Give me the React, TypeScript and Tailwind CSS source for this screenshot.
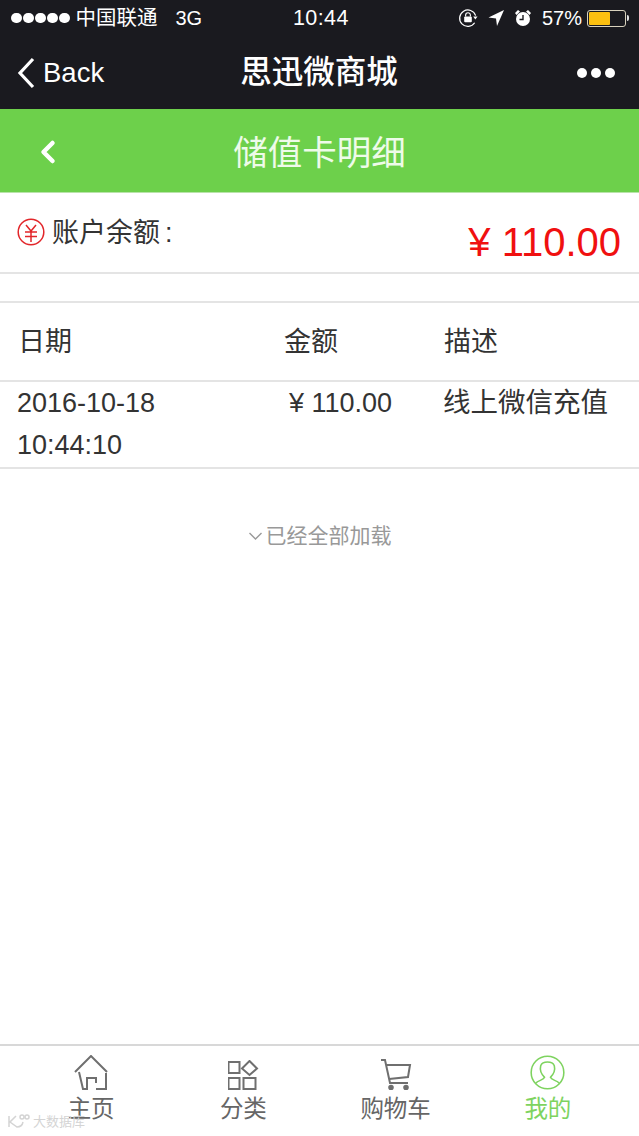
import { ChevronLeft } from 'lucide-react'

const tabs = [
  { label: '主页', active: false, icon: <HomeIcon /> },
  { label: '分类', active: false, icon: <GridIcon /> },
  { label: '购物车', active: false, icon: <CartIcon /> },
  { label: '我的', active: true, icon: <UserIcon /> },
]

function HomeIcon() {
  return (
    <svg width="34" height="35" viewBox="0 0 34 35" fill="none" stroke="#6f6f6f" strokeWidth="2">
      <path d="M1 17 L17 1 L33 17" />
      <path d="M5 17 L9 34 H13 V23 H22 V28" />
      <path d="M32 18 V34 H22" />
    </svg>
  )
}

function GridIcon() {
  return (
    <svg width="31" height="30" viewBox="0 0 31 30" fill="none" stroke="#6f6f6f" strokeWidth="2">
      <rect x="0.5" y="2" width="11" height="11" />
      <path d="M21.5 1 L29 8.5 L21.5 15 L14 8.5 Z" />
      <rect x="0.5" y="18" width="11" height="11" />
      <rect x="15.5" y="18" width="12" height="11" />
    </svg>
  )
}

function CartIcon() {
  return (
    <svg width="32" height="31" viewBox="0 0 32 31" fill="none" stroke="#6f6f6f" strokeWidth="2">
      <path d="M1 1 H5 L10 24 H28" />
      <path d="M6 6 H30 L28 18 L9 20" />
      <circle cx="11" cy="28.5" r="1.8" fill="#6f6f6f" />
      <circle cx="26" cy="28.5" r="1.8" fill="#6f6f6f" />
    </svg>
  )
}

function UserIcon() {
  return (
    <svg width="35" height="35" viewBox="0 0 36 36" fill="none" stroke="#7ed35f" strokeWidth="1.6">
      <circle cx="18" cy="18" r="16.8" />
      <path d="M6 29 C8 26 14 26 15 23 C12 20 10 15 11 11 C13 6 23 6 25 11 C26 15 24 20 21 23 C22 26 28 26 30 29" />
    </svg>
  )
}

function StatusIcons() {
  return (
    <div className="flex items-center">
      <svg width="20" height="20" viewBox="0 0 21 21" fill="none" className="mr-[10px]">
        <path d="M18.5 8 A 8.6 8.6 0 1 0 17.5 15.5" stroke="#fff" strokeWidth="1.3" />
        <path d="M16 9 H20.5 L18.2 12 Z" fill="#fff" />
        <rect x="6.5" y="9" width="8" height="6" rx="1" fill="#fff" />
        <path d="M8 9 V7.5 A2.5 2.5 0 0 1 13 7.5 V9" stroke="#fff" strokeWidth="1.2" />
      </svg>
      <svg width="17" height="18" viewBox="0 0 17 18" className="mr-[9px]">
        <path d="M16 1 L9 17 L8 9.5 L0.5 8.5 Z" fill="#fff" />
      </svg>
      <svg width="18" height="18" viewBox="0 0 18 18" className="mr-[10px]">
        <circle cx="9" cy="10" r="7" fill="#fff" />
        <path d="M1 4 L4 1 L6 2.5 L2.5 6 Z M17 4 L14 1 L12 2.5 L15.5 6 Z" fill="#fff" />
        <path d="M9 6 V10.5 H5.5" stroke="#1a1a1f" strokeWidth="1.4" fill="none" />
      </svg>
      <span className="text-[20px] mr-[5px]">57%</span>
      <div className="w-[39px] h-[17px] rounded-[3px] border border-[#d8d2bd] p-px">
        <div className="w-[21px] h-full rounded-[1px] bg-[#fcc010]" />
      </div>
      <div className="w-[2px] h-[6px] rounded-r-sm bg-[#e0e0e0] ml-px" />
    </div>
  )
}

export default function App() {
  return (
    <div className="w-[639px] h-[1136px] flex flex-col overflow-hidden bg-white font-['Liberation_Sans','Noto_Sans_CJK_SC',sans-serif]">
      <div className="h-[109px] shrink-0 bg-[#1a1a1f] text-white">
        <div className="relative h-[36px] flex items-center justify-between pl-[11px] pr-[10px]">
          <div className="flex items-center">
            <div className="flex gap-[1.5px] mr-[6px]">
              {[0, 1, 2, 3, 4].map((i) => (
                <span key={i} className="w-[10.5px] h-[10.5px] rounded-full bg-white" />
              ))}
            </div>
            <span className="text-[20.5px]">中国联通</span>
            <span className="text-[20px] ml-[18px]">3G</span>
          </div>
          <span className="absolute left-[293px] top-[2px] text-[21.5px] tracking-[0.4px]">10:44</span>
          <StatusIcons />
        </div>
        <div className="relative h-[73px] flex items-center justify-between pl-[15px] pr-[24px]">
          <div className="flex items-center">
            <svg width="22" height="32" viewBox="0 0 22 32" fill="none" stroke="#fff" strokeWidth="3.2" className="mr-[6px]">
              <path d="M18 2 L5 16 L18 30" />
            </svg>
            <span className="text-[27.5px]">Back</span>
          </div>
          <span className="absolute inset-x-0 pr-[1px] text-center text-[31.5px] font-medium pointer-events-none">思迅微商城</span>
          <div className="flex gap-[4px]">
            <span className="w-[10px] h-[10px] rounded-full bg-white" />
            <span className="w-[10px] h-[10px] rounded-full bg-white" />
            <span className="w-[10px] h-[10px] rounded-full bg-white" />
          </div>
        </div>
      </div>

      <div className="relative h-[84px] shrink-0 flex items-center justify-center pt-[6px] bg-[#6dd04b] border-b border-[#b9e3aa]">
        <ChevronLeft className="absolute left-[30px] top-[25px] text-white" size={36} strokeWidth={3} />
        <span className="text-[34.5px] text-[#eefbe9]">储值卡明细</span>
      </div>

      <div className="flex-1 flex flex-col text-[#333]">
        <div className="relative h-[81px] shrink-0 flex pl-[17px] pt-[25px] border-b-2 border-[#e4e4e4]">
          <svg width="28" height="28" viewBox="0 0 28 28" fill="none" stroke="#e2262a" strokeWidth="1.5" className="mr-[7px]">
            <circle cx="14" cy="14" r="12.8" />
            <path d="M9 7 L14 13 L19 7 M8 14 H20 M8 18.5 H20 M14 13 V24" />
          </svg>
          <span className="text-[27px] leading-[32px] -mt-px">账户余额<span className="ml-[5px]">:</span></span>
          <span className="absolute right-[18px] top-[26px] text-[40px] leading-[46px] text-[#f01010]">¥ 110.00</span>
        </div>

        <div className="h-[27px] shrink-0" />

        <div className="grid grid-cols-[266px_160px_1fr] h-[81px] shrink-0 items-center pl-[18px] pt-px border-y-2 border-[#e4e4e4] text-[27px]">
          <span>日期</span>
          <span>金额</span>
          <span>描述</span>
        </div>

        <div className="grid grid-cols-[267px_160px_1fr] h-[87px] shrink-0 pl-[17px] border-b-2 border-[#e4e4e4] text-[27px] leading-[42px]">
          <span>
            2016-10-18
            <br />
            10:44:10
          </span>
          <span className="pl-[5px]">¥ 110.00</span>
          <span className="text-[27.5px] -ml-px">线上微信充值</span>
        </div>

        <div className="flex items-center justify-center mt-[52px] text-[21px] leading-[30px] text-[#999]">
          <svg width="15" height="10" viewBox="0 0 15 10" fill="none" stroke="#999" strokeWidth="1.4" className="mr-[3px]">
            <path d="M1.5 2 L7.5 8 L13.5 2" />
          </svg>
          已经全部加载
        </div>
      </div>

      <div className="relative h-[92px] shrink-0 grid grid-cols-4 px-[15px] border-t-2 border-[#d8d8d8] bg-white">
        {tabs.map((tab) => (
          <div key={tab.label} className={`flex flex-col items-center ${tab.active ? 'text-[#7ed35f]' : 'text-[#666]'}`}>
            <div className="h-[44px] flex items-end justify-center">{tab.icon}</div>
            <span className="text-[23.5px] leading-[32px] mt-[3px]">{tab.label}</span>
          </div>
        ))}
        <div className="absolute left-[7px] bottom-[5px] flex items-center gap-[3px] text-[13px] text-[#d4d4d4]">
          <svg width="23" height="15" viewBox="0 0 23 15" fill="none" stroke="#d4d4d4" strokeWidth="1.5">
            <path d="M2 2 V13 M9 2 L3 8 L10 13 Q15 13 16 8" />
            <circle cx="15" cy="3" r="2" />
            <circle cx="20" cy="3" r="2" />
          </svg>
          <span>大数据库</span>
        </div>
      </div>
    </div>
  )
}
